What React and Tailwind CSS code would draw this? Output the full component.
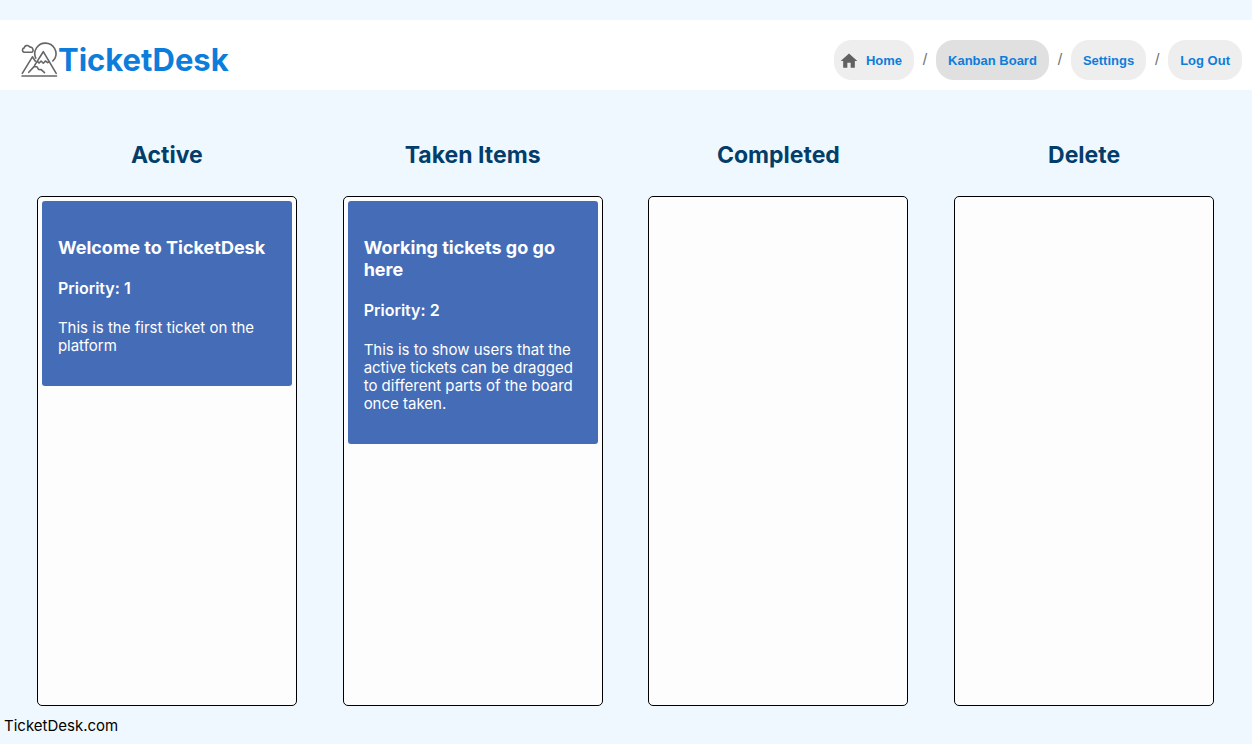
const columns = [
  {
    title: "Active",
    tickets: [
      { title: "Welcome to TicketDesk", priority: 1, text: "This is the first ticket on the platform" },
    ],
  },
  {
    title: "Taken Items",
    tickets: [
      {
        title: "Working tickets go go here",
        priority: 2,
        text: "This is to show users that the active tickets can be dragged to different parts of the board once taken.",
      },
    ],
  },
  { title: "Completed", tickets: [] },
  { title: "Delete", tickets: [] },
];

const links = [
  { label: "Home", home: true },
  { label: "Kanban Board", current: true },
  { label: "Settings" },
  { label: "Log Out" },
];

function Logo() {
  return (
    <svg
      viewBox="0 1 38 38"
      className="size-[38px] shrink-0"
      fill="none"
      stroke="#666"
      strokeWidth="1.6"
      strokeLinejoin="round"
      strokeLinecap="round"
      aria-hidden="true"
    >
      <path d="M15.800 18.200A10.600 10.600 0 1 1 34.800 18.600L32.800 21" />
      <path d="M4 12.300a2.300 2.300 0 0 1 .2-4.400 3 3 0 0 1 5-1.600l.9.9c1.500-.2 2.500.5 2.600 1.800.8 1.200.2 3-1 3.300z" />
      <path d="M2.300 33.300 12.400 16.800l3 4.400" />
      <path d="M14.600 25.400 23.300 11.700 36.200 33.300" />
      <path d="m17.300 21.500 1.900 1.500 1.900-2 2.200 2.200 2.100-2.200 2.300 1.600 1-.8" />
      <path d="M8.800 32.300 14 26.600l3 .2 1.500 2.600 2.700.2 3.300 3" />
      <path d="M2 36h34.500" />
    </svg>
  );
}

function HomeIcon() {
  return (
    <svg viewBox="0 0 24 24" className="-ml-[7px] size-5 fill-[#616161]" aria-hidden="true">
      <path d="M10 20v-6h4v6h5v-8h3L12 3 2 12h3v8z" />
    </svg>
  );
}

function Ticket({ title, priority, text }) {
  return (
    <article className="rounded-[3px] bg-[#446cb7] px-4 pt-9 pb-[31px] text-white">
      <h3 className="text-lg/[22px] font-bold">{title}</h3>
      <h4 className="mt-5 mb-[22px] text-base/[18px] font-semibold">Priority: {priority}</h4>
      <p className="text-[15px]/[18px]">{text}</p>
    </article>
  );
}

export default function App() {
  return (
    <div className="flex min-h-screen flex-col bg-[#f0f8ff] pt-5 font-[Inter,sans-serif]">
      <header className="flex items-center justify-between bg-white pt-5 pr-2.5 pb-2.5 pl-5">
        <a href="#home" className="flex items-center text-[#0d7ddb]">
          <Logo />
          <span className="text-[31px]/[38px] font-bold">TicketDesk</span>
        </a>
        <nav aria-label="Breadcrumb">
          <ol className="flex items-center font-['Liberation_Sans',sans-serif]">
            {links.map(({ label, home, current }, i) => (
              <li key={label} className="flex items-center">
                {i > 0 && (
                  <span className="w-[22px] text-center text-base text-[#757575]" aria-hidden="true">
                    /
                  </span>
                )}
                <a
                  href="#page"
                  aria-current={current ? "page" : undefined}
                  className={`flex h-10 items-center gap-[7px] rounded-[18px] px-3 pt-0.5 text-[13px] font-bold text-[#0d7ddb] ${
                    current ? "bg-[#e0e0e0]" : "bg-[#eeeeee]"
                  }`}
                >
                  {home && <HomeIcon />}
                  {label}
                </a>
              </li>
            ))}
          </ol>
        </nav>
      </header>

      <main className="grid grow grid-cols-4 pt-[50px] pr-[15px] pl-3.5">
        {columns.map((column) => (
          <section key={column.title} className="flex flex-col items-center">
            <h2 className="text-[23px]/[30px] font-bold text-[#033e6b]">{column.title}</h2>
            <div className="mt-[26px] min-h-[510px] w-[260px] grow rounded-[5px] border border-black bg-[#fdfdfd] p-1">
              {column.tickets.map((ticket) => (
                <Ticket key={ticket.title} {...ticket} />
              ))}
            </div>
          </section>
        ))}
      </main>

      <footer className="px-1 pt-[11px] pb-[9px] text-[15px]/[18px] text-black">TicketDesk.com</footer>
    </div>
  );
}
